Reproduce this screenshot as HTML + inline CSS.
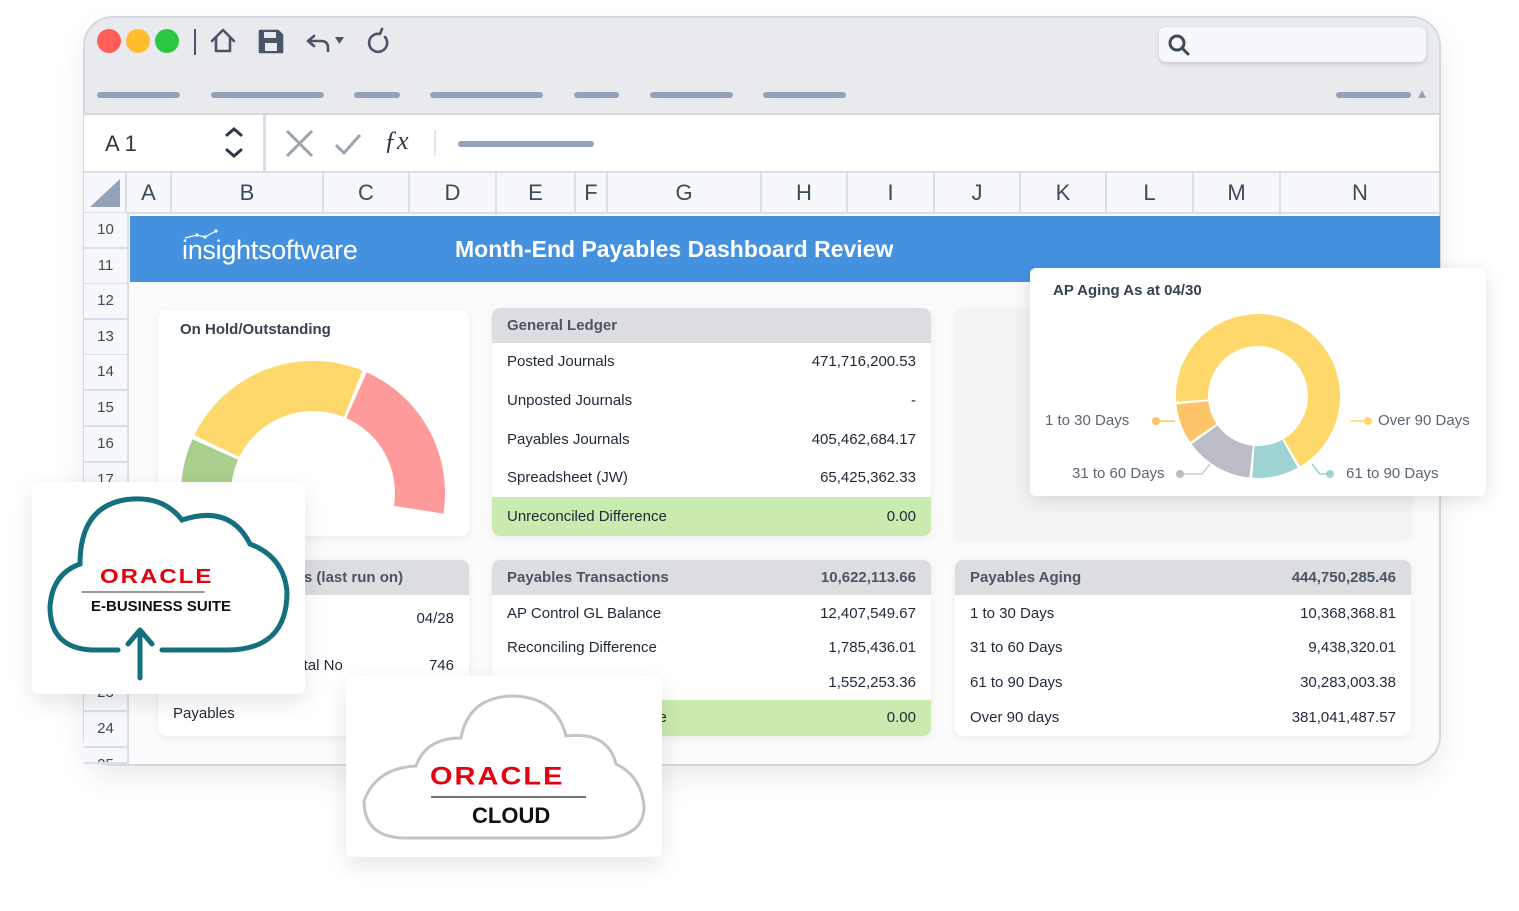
<!DOCTYPE html>
<html><head><meta charset="utf-8"><style>
*{box-sizing:border-box;margin:0;padding:0}
body{width:1519px;height:911px;background:#fff;position:relative;overflow:hidden;font-family:"Liberation Sans",sans-serif;color:#1f2937}
.a{position:absolute}
.win{left:83px;top:16px;width:1358px;height:750px;border:2px solid #d3d8e0;border-radius:30px;overflow:hidden;background:#fbfbfc;box-shadow:0 12px 30px rgba(0,0,0,.08)}
.bar{height:6px;border-radius:3px;background:#93a2b8;top:92px}
.col{top:173px;height:39px;border-right:2px solid #d8dfe9;background:#f6f8fb;font-size:22px;color:#3c4a5e;text-align:center;line-height:40px}
.row{left:84px;width:43px;height:36px;border-bottom:2px solid #d8dfe9;background:#f6f8fb;font-size:15px;color:#3c4a5e;text-align:center;line-height:34px}
.card{background:#fff;border-radius:8px;box-shadow:0 2px 8px rgba(0,0,0,.07);overflow:hidden}
.hd{background:#dcdde1;height:35px;font-size:15px;color:#4b5563;font-weight:bold;padding:0 15px;line-height:36px;display:flex;justify-content:space-between}
.r{font-size:15px;color:#1f2937;padding:0 15px;display:flex;justify-content:space-between}
.g{background:#c9ebb0}
.lbl{font-size:15px;color:#5b6475}
</style></head><body>
<div class="a win">
 <div class="a" style="left:0;top:0;width:1358px;height:97px;background:#e8eaee;border-bottom:2px solid #d3d8e0"></div>
</div>
<div class="a" style="left:97px;top:29px;width:24px;height:24px;border-radius:50%;background:#fe5f58"></div>
<div class="a" style="left:126px;top:29px;width:24px;height:24px;border-radius:50%;background:#febc2e"></div>
<div class="a" style="left:155px;top:29px;width:24px;height:24px;border-radius:50%;background:#29c840"></div>
<div class="a" style="left:194px;top:29px;width:2px;height:26px;background:#4a5568"></div>
<svg class="a" style="left:208px;top:26px" width="190" height="32" viewBox="0 0 190 32" fill="none" stroke="#4a5568" stroke-width="2.6" stroke-linejoin="round" stroke-linecap="round">
 <path d="M4 15 L15 4 L26 15 M8 12 V25 H22 V12"/>
 <path d="M52 5 H70 L74 9 V26 H52 Z" fill="#4a5568"/><rect x="56" y="6" width="12" height="6" fill="#e8eaee" stroke="none"/><rect x="57" y="17" width="12" height="8" fill="#e8eaee" stroke="none"/>
 <path d="M106 10 L100 15 L106 20 M100 15 H113 Q120 15 120 22 V25"/>
 <path d="M127 11 H136 L131.5 18 Z" fill="#4a5568" stroke="none"/>
 <path d="M172 8 A9 9 0 1 0 177 11 M172 8 L174 3"/>
</svg>
<div class="a" style="left:1159px;top:27px;width:267px;height:35px;background:#f7f8fb;border-radius:7px;box-shadow:0 2px 4px rgba(0,0,0,.15)"></div>
<svg class="a" style="left:1166px;top:31px" width="28" height="28" viewBox="0 0 28 28" fill="none" stroke="#3c4a5e" stroke-width="3"><circle cx="11" cy="12" r="7"/><path d="M16 17 L22 23" stroke-linecap="round"/></svg>
<div class="a bar" style="left:97px;width:83px"></div>
<div class="a bar" style="left:211px;width:113px"></div>
<div class="a bar" style="left:354px;width:46px"></div>
<div class="a bar" style="left:430px;width:113px"></div>
<div class="a bar" style="left:574px;width:45px"></div>
<div class="a bar" style="left:650px;width:83px"></div>
<div class="a bar" style="left:763px;width:83px"></div>
<div class="a bar" style="left:1336px;width:75px"></div>
<div class="a" style="left:1418px;top:90px;width:0;height:0;border-left:4px solid transparent;border-right:4px solid transparent;border-bottom:8px solid #93a2b8"></div>
<div class="a" style="left:84px;top:115px;width:1355px;height:58px;background:#fff;border-bottom:2px solid #d8dfe9"></div>
<div class="a" style="left:105px;top:131px;font-size:22px;color:#2d3748">A 1</div>
<svg class="a" style="left:222px;top:126px" width="24" height="36" viewBox="0 0 24 36" fill="none" stroke="#2d3748" stroke-width="3" stroke-linecap="round"><path d="M5 9 L12 3 L19 9 M5 24 L12 30 L19 24"/></svg>
<div class="a" style="left:263px;top:115px;width:3px;height:58px;background:#d8dfe9"></div>
<svg class="a" style="left:284px;top:128px" width="80" height="32" viewBox="0 0 80 32" fill="none" stroke="#9aa3b0" stroke-width="3"><path d="M3 3 L28 28 M28 3 L3 28"/><path d="M52 17 L60 25 L76 7"/></svg>
<div class="a" style="left:384px;top:126px;font-size:26px;font-style:italic;color:#2d3748;font-family:'Liberation Serif',serif">ƒx</div>
<div class="a" style="left:434px;top:130px;width:2px;height:26px;background:#e2e6ec"></div>
<div class="a" style="left:458px;top:141px;width:136px;height:6px;border-radius:3px;background:#93a2b8"></div>
<div class="a col" style="left:84px;width:43px"><svg width="43" height="38"><path d="M6 34 L36 34 L36 6 Z" fill="#93a2b8"/></svg></div>
<div class="a col" style="left:127px;width:45px">A</div>
<div class="a col" style="left:172px;width:152px">B</div>
<div class="a col" style="left:324px;width:86px">C</div>
<div class="a col" style="left:410px;width:87px">D</div>
<div class="a col" style="left:497px;width:79px">E</div>
<div class="a col" style="left:576px;width:32px">F</div>
<div class="a col" style="left:608px;width:154px">G</div>
<div class="a col" style="left:762px;width:86px">H</div>
<div class="a col" style="left:848px;width:87px">I</div>
<div class="a col" style="left:935px;width:86px">J</div>
<div class="a col" style="left:1021px;width:86px">K</div>
<div class="a col" style="left:1107px;width:87px">L</div>
<div class="a col" style="left:1194px;width:87px">M</div>
<div class="a col" style="left:1281px;width:158px;border-right:none">N</div>
<div class="a" style="left:84px;top:212px;width:1355px;height:2px;background:#d8dfe9"></div>
<div class="a row" style="top:213px">10</div><div class="a row" style="top:249px">11</div><div class="a row" style="top:284px">12</div><div class="a row" style="top:320px">13</div><div class="a row" style="top:355px">14</div><div class="a row" style="top:391px">15</div><div class="a row" style="top:427px">16</div><div class="a row" style="top:463px">17</div><div class="a row" style="top:676px">23</div><div class="a row" style="top:712px">24</div><div class="a row" style="top:748px;height:16px;overflow:hidden">25</div>
<div class="a" style="left:127px;top:213px;width:2px;height:552px;background:#d8dfe9"></div>
<div class="a" style="left:130px;top:216px;width:1310px;height:66px;background:#4491e0"></div>
<div class="a" style="left:182px;top:235px;font-size:27px;color:#fff;letter-spacing:-0.3px">insightsoftware</div>
<svg class="a" style="left:183px;top:229px" width="50" height="12"><path d="M2 9 L14 6 L22 8 L33 2" stroke="#fff" stroke-width="1.2" fill="none"/><circle cx="14" cy="6" r="1.6" fill="#fff"/><circle cx="22" cy="8" r="1.6" fill="#fff"/><circle cx="33" cy="2" r="1.6" fill="#fff"/></svg>
<div class="a" style="left:455px;top:236px;font-size:23px;font-weight:bold;color:#fff">Month-End Payables Dashboard Review</div>
<div class="a card" style="left:158px;top:310px;width:311px;height:226px"></div>
<div class="a" style="left:180px;top:321px;font-size:15px;font-weight:bold;color:#374151">On Hold/Outstanding</div>
<svg class="a" style="left:0;top:0" width="500" height="560" fill="none" stroke-width="50">
 <circle cx="313" cy="493" r="107" stroke="#a8cf8e" stroke-dasharray="63.5 900" transform="rotate(-190 313 493)"/>
 <circle cx="313" cy="493" r="107" stroke="#fed86a" stroke-dasharray="160.6 900" transform="rotate(-154 313 493)"/>
 <circle cx="313" cy="493" r="107" stroke="#fe9a9a" stroke-dasharray="140 900" transform="rotate(-66 313 493)"/>
</svg>
<div class="a card" style="left:492px;top:308px;width:439px;height:228px">
 <div class="hd"><span>General Ledger</span></div>
 <div class="r" style="height:38px;line-height:38px">Posted Journals<span>471,716,200.53</span></div>
 <div class="r" style="height:39px;line-height:39px">Unposted Journals<span>-</span></div>
 <div class="r" style="height:39px;line-height:39px">Payables Journals<span>405,462,684.17</span></div>
 <div class="r" style="height:38px;line-height:38px">Spreadsheet (JW)<span>65,425,362.33</span></div>
 <div class="r g" style="height:39px;line-height:39px">Unreconciled Difference<span>0.00</span></div>
</div>
<div class="a card" style="left:955px;top:308px;width:456px;height:230px;background:#f3f3f4"></div>
<div class="a card" style="left:158px;top:560px;width:311px;height:176px">
 <div class="hd"><span>Payables Programs (last run on)</span></div>
 <div class="r" style="height:47px;line-height:47px">Last Run<span>04/28</span></div>
 <div class="r" style="height:47px;line-height:47px">Invoices on Hold Total No<span>746</span></div>
 <div class="r" style="height:47px;line-height:50px">Payables<span></span></div>
</div>
<div class="a card" style="left:492px;top:560px;width:439px;height:176px">
 <div class="hd"><span>Payables Transactions</span><span>10,622,113.66</span></div>
 <div class="r" style="height:35px;line-height:38px">AP Control GL Balance<span>12,407,549.67</span></div>
 <div class="r" style="height:35px;line-height:36px">Reconciling Difference<span>1,785,436.01</span></div>
 <div class="r" style="height:35px;line-height:36px">Payables Balance<span>1,552,253.36</span></div>
 <div class="r g" style="height:36px;line-height:36px">Unreconciled Difference<span>0.00</span></div>
</div>
<div class="a card" style="left:955px;top:560px;width:456px;height:176px">
 <div class="hd"><span>Payables Aging</span><span>444,750,285.46</span></div>
 <div class="r" style="height:35px;line-height:38px">1 to 30 Days<span>10,368,368.81</span></div>
 <div class="r" style="height:35px;line-height:36px">31 to 60 Days<span>9,438,320.01</span></div>
 <div class="r" style="height:35px;line-height:36px">61 to 90 Days<span>30,283,003.38</span></div>
 <div class="r" style="height:36px;line-height:36px">Over 90 days<span>381,041,487.57</span></div>
</div>
<div class="a" style="left:1030px;top:268px;width:456px;height:228px;background:#fff;border-radius:6px;box-shadow:0 4px 18px rgba(0,0,0,.12)"></div>
<div class="a" style="left:1053px;top:282px;font-size:15px;font-weight:bold;color:#374151">AP Aging As at 04/30</div>
<svg class="a" style="left:1030px;top:268px" width="456" height="228" fill="none">
 <g stroke-width="32">
 <circle cx="228" cy="128" r="66" stroke="#fed86a" stroke-dasharray="279.9 500" transform="rotate(176 228 128)"/>
 <circle cx="228" cy="128" r="66" stroke="#9fd2d2" stroke-dasharray="38 500" transform="rotate(61 228 128)"/>
 <circle cx="228" cy="128" r="66" stroke="#bcbcc6" stroke-dasharray="55.3 500" transform="rotate(96 228 128)"/>
 <circle cx="228" cy="128" r="66" stroke="#fec469" stroke-dasharray="32.3 500" transform="rotate(146 228 128)"/>
 </g>
 <g stroke-width="1.5"><path d="M128 153 H145" stroke="#fec469"/><path d="M320 153 H336" stroke="#fed86a"/><path d="M152 206 H172 L180 196" stroke="#ccc"/><path d="M282 196 L290 206 H300" stroke="#9fd2d2"/></g>
 <circle cx="126" cy="153" r="4" fill="#fec469"/><circle cx="338" cy="153" r="4" fill="#fed86a"/><circle cx="150" cy="206" r="4" fill="#bcbcc6"/><circle cx="300" cy="206" r="4" fill="#9fd2d2"/>
</svg>
<div class="a lbl" style="left:1045px;top:412px">1 to 30 Days</div>
<div class="a lbl" style="left:1378px;top:412px">Over 90 Days</div>
<div class="a lbl" style="left:1072px;top:465px">31 to 60 Days</div>
<div class="a lbl" style="left:1346px;top:465px">61 to 90 Days</div>
<div class="a" style="left:32px;top:482px;width:273px;height:212px;background:#fff;border-radius:6px;box-shadow:0 8px 24px rgba(0,0,0,.1)"></div>
<svg class="a" style="left:32px;top:482px" width="273" height="212" fill="none" stroke="#14707e" stroke-width="5" stroke-linecap="round">
 <path d="M86 168 H60 Q18 166 18 125 Q20 92 48 82 Q48 26 92 18 Q130 12 150 38 Q198 22 218 62 Q252 75 255 110 Q255 168 195 168 H130"/>
 <path d="M108 196 V150 M96 162 L108 148 L120 162" stroke-linejoin="round"/>
 <path d="M50 110 H172" stroke="#777" stroke-width="1.5"/>
</svg>
<div class="a" style="left:100px;top:563px;font-size:24px;color:#e3000f;letter-spacing:2px;font-weight:bold;transform:scaleY(0.85)">ORACLE</div>
<div class="a" style="left:91px;top:598px;font-size:15px;font-weight:bold;color:#111">E-BUSINESS SUITE</div>
<div class="a" style="left:346px;top:676px;width:316px;height:181px;background:#fff;border-radius:6px;box-shadow:0 8px 24px rgba(0,0,0,.1)"></div>
<svg class="a" style="left:346px;top:676px" width="316" height="181" fill="none" stroke="#c4c4c4" stroke-width="3">
 <path d="M60 162 H255 Q298 162 298 130 Q295 100 270 88 Q262 55 220 60 Q210 20 165 20 Q122 22 115 62 Q80 62 70 90 Q30 92 18 125 Q18 162 60 162 Z"/>
 <path d="M85 121 H240" stroke="#222" stroke-width="1.3"/>
</svg>
<div class="a" style="left:430px;top:761px;font-size:29px;color:#e3000f;font-weight:bold;letter-spacing:2px;transform:scaleY(0.85)">ORACLE</div>
<div class="a" style="left:472px;top:803px;font-size:22px;font-weight:bold;color:#111">CLOUD</div>
</body></html>
